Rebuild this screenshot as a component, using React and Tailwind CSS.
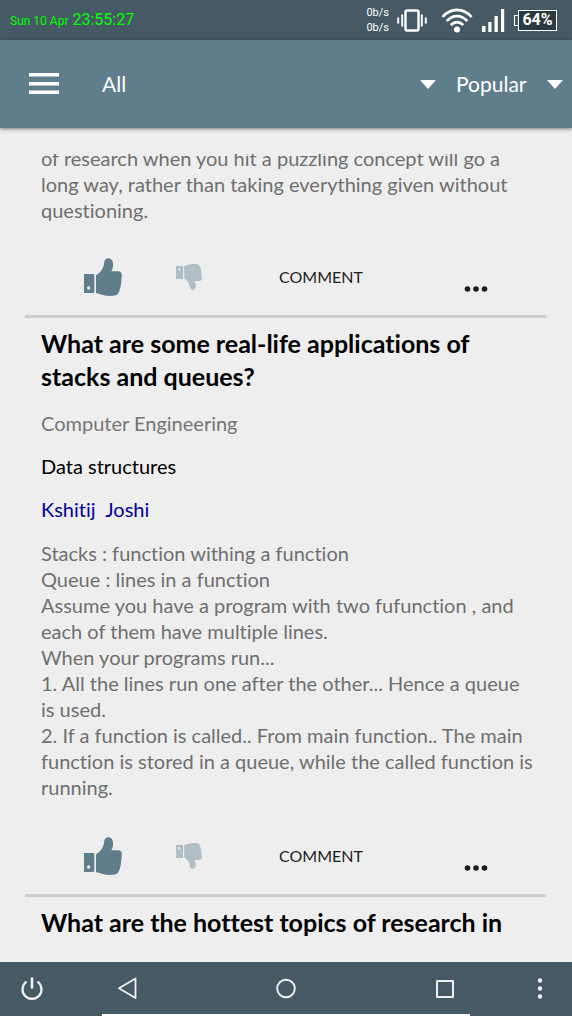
import React from "react";

const THUMB =
  "M36 52C48 45 58 32 60 18C61 6 66 1 74 1C84 2 88 12 87 22C87 30 84 36 82 40H104C112 41 115 48 113 56C112 78 109 95 103 106C98 113 90 114 78 114C62 114 50 109 36 105Z";
const CUFF =
  "M3 48H27Q31 48 31 52V101Q31 105 27 105H0V48ZM14 85A5 5 0 1 0 14 95A5 5 0 1 0 14 85Z";

function Thumb({ className }) {
  return (
    <svg viewBox="0 0 114 114" className={className} fill="currentColor" fillRule="evenodd" aria-hidden="true">
      <path d={THUMB} />
      <path d={CUFF} />
    </svg>
  );
}

function StatusBar() {
  return (
    <div className="flex h-10 shrink-0 items-center justify-between bg-[#455a64] pr-[15px] pl-[10px] font-['Roboto',sans-serif] text-white">
      <div className="flex items-baseline gap-1 text-[#00ff00]">
        <span className="text-[12px]">Sun 10 Apr</span>
        <span className="text-[16px]">23:55:27</span>
      </div>
      <div className="flex items-center">
        <div className="mr-2 text-[11px] leading-[15px]">
          <div>0b/s</div>
          <div>0b/s</div>
        </div>
        <svg viewBox="0 0 30 24" className="mr-[14px] h-6 w-[30px]" fill="none" stroke="currentColor" aria-hidden="true">
          <rect x="8.5" y="2.5" width="13" height="20" rx="1.5" strokeWidth="2.4" />
          <path d="M5.2 6.500v12M1.200 9.500v6M24.800 6.500v12M28.800 9.500v6" strokeWidth="2" />
        </svg>
        <svg viewBox="0 0 32 25" className="mr-2 h-[25px] w-8" fill="none" stroke="currentColor" strokeWidth="2.700" aria-hidden="true">
          <path d="M1.500 9C9.500-.500 22.500-.500 30.500 9M5.700 13.200C11.500 6.400 20.500 6.400 26.300 13.200M9.800 17.200C13.500 13 18.500 13 22.200 17.200" />
          <circle cx="16" cy="21.500" r="3" fill="currentColor" stroke="none" />
        </svg>
        <svg viewBox="0 0 24 24" className="mr-[9px] h-6 w-6" fill="currentColor" aria-hidden="true">
          <path d="M1 18h3.500v6H1zM7.300 14h3.200v10H7.300zM13.500 8h3.300v16h-3.300zM20 1h3.200v23H20z" />
        </svg>
        <div className="flex items-center">
          <div className="h-[11px] w-1 border border-r-0 border-white" />
          <div className="flex h-[21px] w-[39px] items-center justify-center border border-white bg-[#2b3a40] text-[16px] font-bold">
            64%
          </div>
        </div>
      </div>
    </div>
  );
}

function Picker({ label, value, className }) {
  return (
    <label className={`grid items-center ${className}`}>
      <select
        aria-label={label}
        defaultValue={value}
        className="col-start-1 row-start-1 w-full appearance-none bg-transparent text-[21px] outline-none"
      >
        <option>{value}</option>
      </select>
      <svg viewBox="0 0 16 9" className="pointer-events-none col-start-1 row-start-1 h-[9px] w-4 justify-self-end" fill="currentColor" aria-hidden="true">
        <path d="M0 0H16L8 9Z" />
      </svg>
    </label>
  );
}

function AppBar() {
  return (
    <header className="z-10 flex h-[88px] shrink-0 items-center bg-[#607d8b] pr-[9px] pl-[29px] text-white shadow-[0_1px_4px_rgba(0,0,0,0.5)]">
      <button type="button" aria-label="Open menu" className="mr-[43px]">
        <svg viewBox="0 0 30 22" className="h-[22px] w-[30px]" fill="currentColor" aria-hidden="true">
          <path d="M0 0h30v3.500H0zM0 9h30v3.500H0zM0 17.500h30V21H0z" />
        </svg>
      </button>
      <Picker label="Category" value="All" className="mr-5 flex-1" />
      <Picker label="Sort by" value="Popular" className="w-[107px]" />
    </header>
  );
}

function Actions() {
  return (
    <div className="grid h-[92px] grid-cols-[92px_103px_1fr_82px] items-center pt-4 pl-[59px]">
      <button type="button" aria-label="Like" className="w-fit text-[#607d8b]">
        <Thumb className="size-[38px]" />
      </button>
      <button type="button" aria-label="Dislike" className="w-fit text-[#b0bec5]">
        <Thumb className="size-[26px] -scale-y-100" />
      </button>
      <button type="button" className="w-fit text-[16px] text-[#1c1c1c]">COMMENT</button>
      <button type="button" aria-label="More" className="w-fit pt-6 text-[#1c1c1c]">
        <svg viewBox="0 0 24 6" className="h-[6px] w-6" fill="currentColor" aria-hidden="true">
          <circle cx="3.500" cy="3" r="2.800" />
          <circle cx="12" cy="3" r="2.800" />
          <circle cx="20.500" cy="3" r="2.800" />
        </svg>
      </button>
    </div>
  );
}

const ANSWER = `Stacks : function withing a function
Queue : lines in a function
Assume you have a program with two fufunction , and
each of them have multiple lines.
When your programs run...
1. All the lines run one after the other... Hence a queue
is used.
2. If a function is called.. From main function.. The main
function is stored in a queue, while the called function is
running.`;

const PREVIOUS = `of research when you hit a puzzling concept will go a
long way, rather than taking everything given without
questioning.`;

function Feed() {
  return (
    <main className="my-[26px] min-h-0 flex-1 overflow-hidden pr-[26px] pl-[25px] text-[20px] leading-[26px]">
      <article className="-mt-[9px] border-b-[3px] border-[#cfcfcf]">
        <p className="-mr-4 pl-4 whitespace-pre-line text-[#6f6f6f]">{PREVIOUS}</p>
        <Actions />
      </article>
      <article className="border-b-[3px] border-[#cfcfcf] pt-[9px]">
        <div className="-mr-4 pb-[2px] pl-4">
          <h2 className="text-[25px] leading-[33px] font-bold text-black">
            What are some real-life applications of<br />stacks and queues?
          </h2>
          <p className="mt-[17px] text-[#757575]">Computer Engineering</p>
          <p className="mt-[17px] text-black">Data structures</p>
          <p className="mt-[17px] whitespace-pre text-[#00009c]">{"Kshitij  Joshi"}</p>
          <p className="mt-[18px] whitespace-pre-line text-[#6f6f6f]">{ANSWER}</p>
        </div>
        <Actions />
      </article>
      <article className="pt-[9px]">
        <h2 className="-mr-4 pl-4 text-[25px] leading-[33px] font-bold text-black">
          What are the hottest topics of research in
        </h2>
      </article>
    </main>
  );
}

function NavBar() {
  const icon = "size-[26px]";
  return (
    <nav className="flex h-[54px] shrink-0 flex-col bg-[#455a64] text-[#f2f2f2]">
      <div className="flex flex-1 items-center justify-between px-[19px]">
        <div className="flex gap-[69px]">
          <button type="button" aria-label="Power">
            <svg viewBox="0 0 26 26" className={icon} fill="none" stroke="currentColor" strokeWidth="2.200" aria-hidden="true">
              <path d="M7.500 6.700A9.500 9.500 0 1 0 18.500 6.700" />
              <path d="M13 2.500V13.500" strokeWidth="2.600" />
            </svg>
          </button>
          <button type="button" aria-label="Back">
            <svg viewBox="0 0 26 26" className={icon} fill="none" stroke="currentColor" strokeWidth="1.800" strokeLinejoin="round" aria-hidden="true">
              <path d="M21.500 3.500V23L5 13.200Z" />
            </svg>
          </button>
        </div>
        <button type="button" aria-label="Home">
          <svg viewBox="0 0 26 26" className={icon} fill="none" stroke="currentColor" strokeWidth="1.900" aria-hidden="true">
            <circle cx="13" cy="13.500" r="8.800" />
          </svg>
        </button>
        <div className="flex gap-[69px]">
          <button type="button" aria-label="Recent apps">
            <svg viewBox="0 0 26 26" className={icon} fill="none" stroke="currentColor" strokeWidth="2" strokeLinejoin="round" aria-hidden="true">
              <rect x="5" y="6" width="16" height="16" />
            </svg>
          </button>
          <button type="button" aria-label="More options">
            <svg viewBox="0 0 26 26" className={icon} fill="currentColor" aria-hidden="true">
              <circle cx="13" cy="5.500" r="2.200" />
              <circle cx="13" cy="13.500" r="2.200" />
              <circle cx="13" cy="21.500" r="2.200" />
            </svg>
          </button>
        </div>
      </div>
      <div className="mx-[102px] h-[2px] bg-white" />
    </nav>
  );
}

export default function App() {
  return (
    <div className="flex h-screen flex-col bg-[#eeeeee] font-['Lato',sans-serif] [font-variant-ligatures:none]">
      <StatusBar />
      <AppBar />
      <Feed />
      <NavBar />
    </div>
  );
}
